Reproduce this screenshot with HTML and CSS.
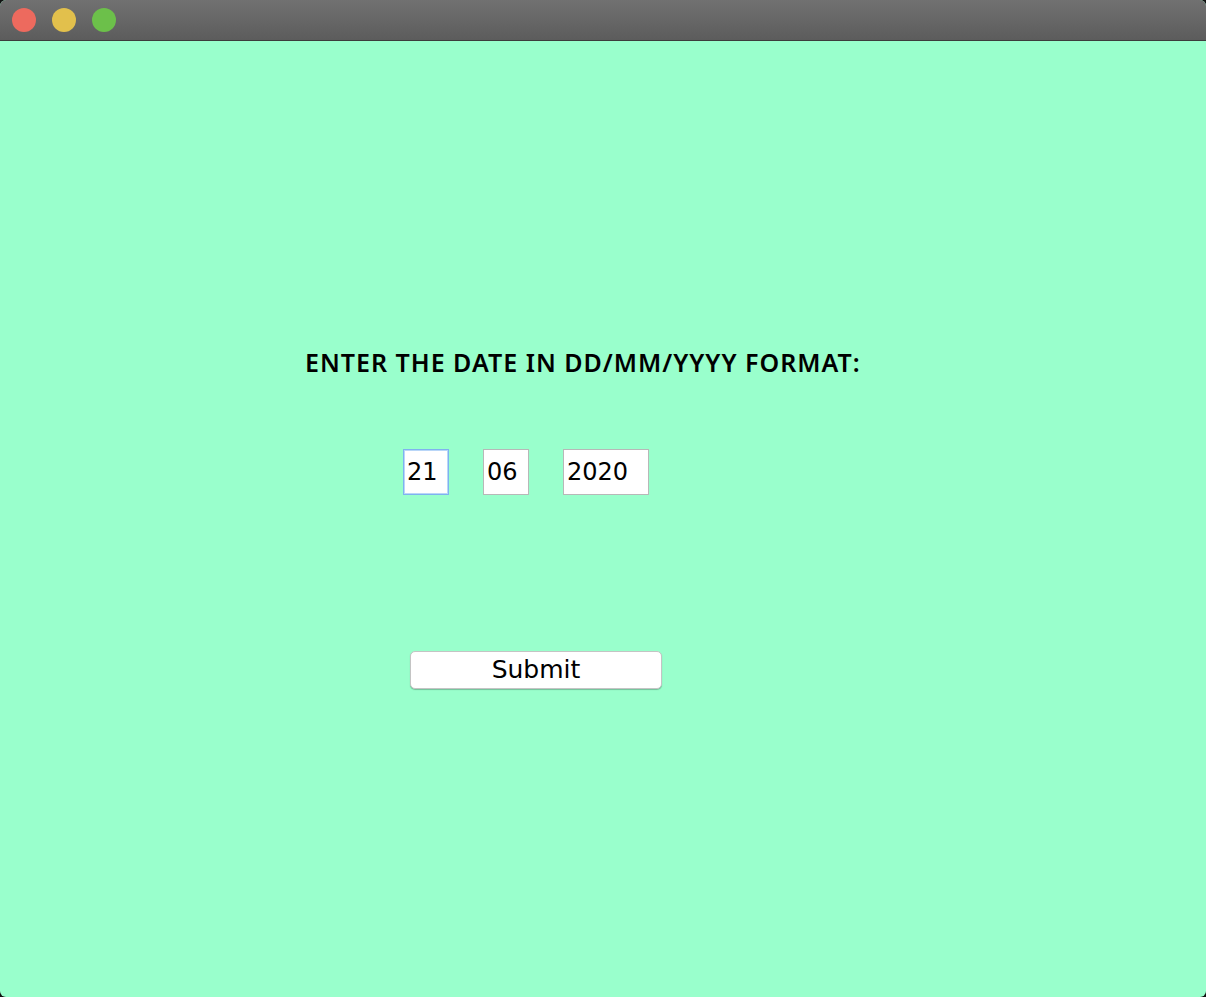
FILE: index.html
```html
<!DOCTYPE html>
<html>
<head>
<meta charset="utf-8">
<link rel="stylesheet" href="styles.css">
</head>
<body>
<div class="window">
  <div class="titlebar">
    <span class="light red"></span>
    <span class="light yellow"></span>
    <span class="light green"></span>
  </div>
  <div class="content">
    <div class="prompt">ENTER THE DATE IN DD/MM/YYYY FORMAT:</div>
    <div class="fields">
      <input class="field focused" type="text" value="21">
      <input class="field" type="text" value="06">
      <input class="field wide" type="text" value="2020">
    </div>
    <button class="submit" type="button">Submit</button>
  </div>
</div>
</body>
</html>
```
FILE: styles.css
```css
html, body {
  margin: 0;
  padding: 0;
  background: #111;
}
.window {
  width: 1206px;
  height: 997px;
  display: flex;
  flex-direction: column;
  border-radius: 6px;
  overflow: hidden;
  background: #99ffcc;
}
.titlebar {
  height: 40px;
  border-bottom: 1px solid #3c3c3c;
  background: linear-gradient(#717171, #5c5c5c);
  display: flex;
  align-items: center;
  gap: 16px;
  padding-left: 12px;
  flex-shrink: 0;
}
.light {
  width: 24px;
  height: 24px;
  border-radius: 50%;
}
.red { background: #ed6a5e; }
.yellow { background: #e2c04c; }
.green { background: #6cc04a; }
.content {
  display: flex;
  flex-direction: column;
  font-family: "DejaVu Sans", sans-serif;
}
.prompt {
  margin-top: 306px;
  margin-left: 305px;
  font-family: "Noto Sans", sans-serif;
  font-size: 25px;
  font-weight: 600;
  letter-spacing: 1px;
  color: #000;
  line-height: 30px;
}
.fields {
  margin-top: 72px;
  margin-left: 403px;
  display: flex;
  gap: 34px;
}
.field {
  box-sizing: border-box;
  width: 46px;
  height: 46px;
  margin: 0;
  padding: 0 0 0 3px;
  border: 1px solid #b8b8b8;
  background: #fff;
  font-family: "DejaVu Sans", sans-serif;
  font-size: 24px;
  color: #000;
  outline: none;
}
.field.focused {
  border: 1px solid #7fb2f0;
  box-shadow: inset 0 0 0 1px #b9d6f8;
}
.field.wide {
  width: 86px;
}
.submit {
  margin-top: 156px;
  margin-left: 410px;
  width: 252px;
  height: 38px;
  box-sizing: border-box;
  background: #fff;
  border: 1px solid #c4c4c4;
  border-radius: 5px;
  box-shadow: 0 1px 1px rgba(0,0,0,0.25);
  font-family: "DejaVu Sans", sans-serif;
  font-size: 25px;
  line-height: 36px;
  color: #000;
  padding: 0;
}
```
